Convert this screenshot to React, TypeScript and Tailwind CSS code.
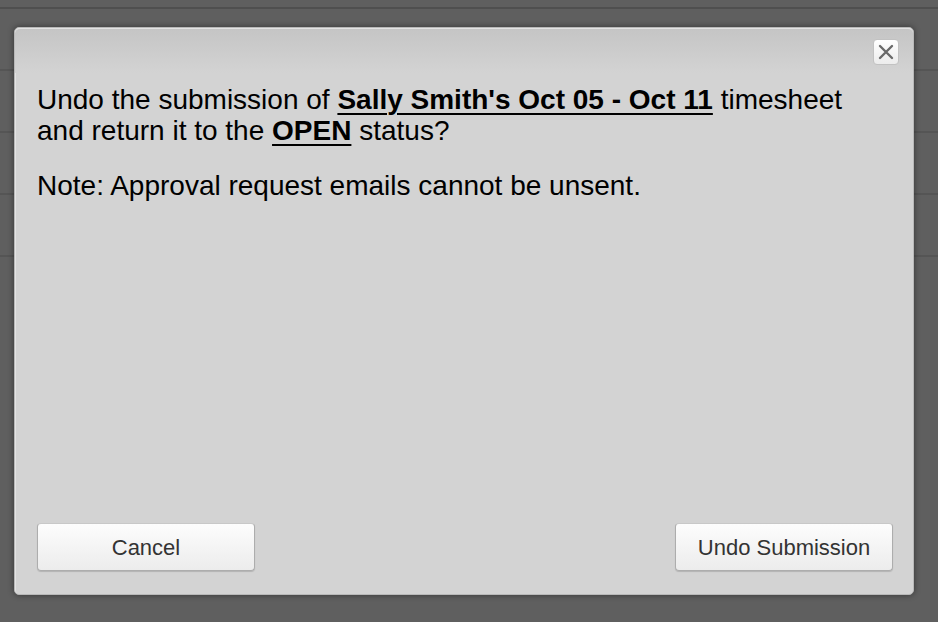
const ROWS = [0, 1, 2, 3];

function DialogButton({ label }: { label: string }) {
  return (
    <button
      type="button"
      className="w-[218px] h-[48px] rounded-[4px] border border-[#adadad] border-t-[#c8c8c8] bg-gradient-to-b from-[#fdfdfd] to-[#ececec] text-[22px] text-[#333] shadow-[0_1px_1px_rgba(0,0,0,0.15)]"
    >
      {label}
    </button>
  );
}

export default function App() {
  return (
    <div className="relative w-[938px] h-[622px] overflow-hidden bg-[#5f5f5f] font-['Liberation_Sans',Arial,sans-serif]">
      {/* page behind the overlay */}
      <div className="flex flex-col">
        <div className="h-[9px] border-b-2 border-[#4f4f4f]" />
        {ROWS.map((r) => (
          <div key={r} className="h-[62px] border-b-2 border-[#555]" />
        ))}
      </div>

      {/* dialog */}
      <div className="absolute left-[14px] top-[27px] w-[900px] h-[568px] flex flex-col rounded-[5px] border border-[#b8b8b8] bg-[#d3d3d3] shadow-[0_0_6px_rgba(0,0,0,0.45),inset_1px_1px_0_#e4e4e4]">
        <div className="absolute inset-x-0 top-0 h-[45px] rounded-t-[5px] bg-gradient-to-b from-[#c5c5c5] to-[#d3d3d3] border-t border-[#e2e2e2]" />
        <button
          type="button"
          className="absolute top-[11px] right-[14px] w-[26px] h-[26px] flex items-center justify-center rounded-[4px] border border-[#c2c2c2] bg-gradient-to-b from-white to-[#ececec]"
        >
          <svg width="18" height="18" viewBox="0 0 18 18" className="text-[#6a6a6a]">
            <path d="M3 3 L15 15 M15 3 L3 15" stroke="currentColor" strokeWidth="2.4" strokeLinecap="round" />
          </svg>
        </button>

        <div className="relative flex-1 pt-[56px] pl-[22px] pr-[20px] text-[28px] leading-[31px] text-black">
          <p>
            Undo the submission of{' '}
            <span className="font-bold underline decoration-2 underline-offset-[4px]">
              Sally Smith's Oct 05 - Oct 11
            </span>{' '}
            timesheet and return it to the{' '}
            <span className="font-bold underline decoration-2 underline-offset-[4px]">OPEN</span> status?
          </p>
          <p className="mt-[24px]">Note: Approval request emails cannot be unsent.</p>
        </div>

        <div className="flex justify-between pl-[22px] pr-[20px] pb-[23px]">
          <DialogButton label="Cancel" />
          <DialogButton label="Undo Submission" />
        </div>
      </div>
    </div>
  );
}
